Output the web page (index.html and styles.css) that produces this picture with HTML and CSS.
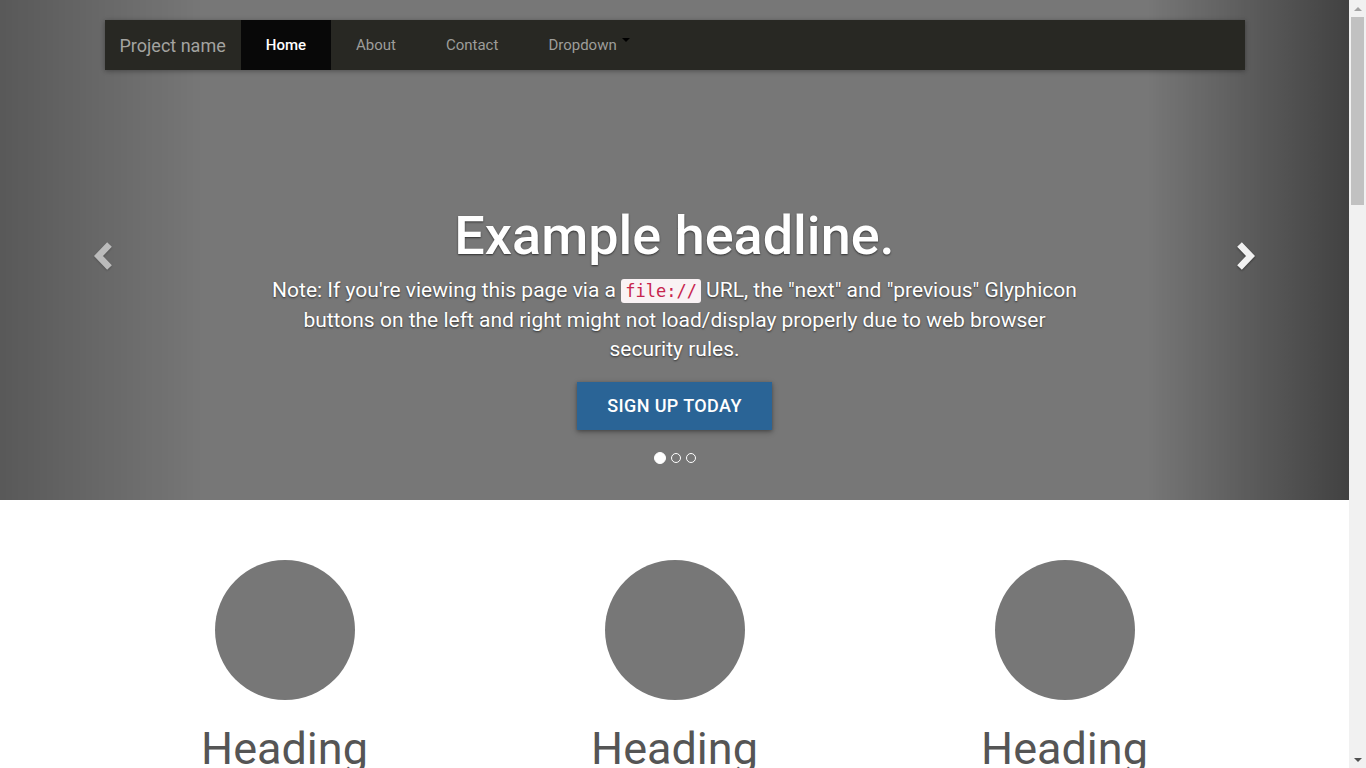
FILE: index.html
```html
<!DOCTYPE html>
<html lang="en">
<head>
<meta charset="utf-8">
<title>Carousel Template</title>
<link rel="stylesheet" href="styles.css">
</head>
<body>
<div class="page">
  <div class="navbar-wrapper">
    <nav class="navbar">
      <a class="brand" href="#">Project name</a>
      <ul class="nav">
        <li class="active"><a href="#">Home</a></li>
        <li><a href="#">About</a></li>
        <li><a href="#">Contact</a></li>
        <li><a href="#" class="dropdown">Dropdown <span class="caret"></span></a></li>
      </ul>
    </nav>
  </div>

  <div class="carousel">
    <a class="control left" href="#">
      <svg class="chev chev-left" width="22" height="32" viewBox="0 0 22 32"><path d="M17.5 3.5 L6.5 15 L17.5 26.5" fill="none" stroke="currentColor" stroke-width="6.5"/></svg>
    </a>
    <div class="caption">
      <h1>Example headline.</h1>
      <p class="note">Note: If you're viewing this page via a <code>file://</code> URL, the "next" and "previous" Glyphicon buttons on the left and right might not load/display properly due to web browser security rules.</p>
      <p><a class="btn" href="#">Sign up today</a></p>
    </div>
    <a class="control right" href="#">
      <svg class="chev chev-right" width="22" height="32" viewBox="0 0 22 32"><path d="M4.5 3.5 L15.5 15 L4.5 26.5" fill="none" stroke="currentColor" stroke-width="6.5"/></svg>
    </a>
    <ol class="indicators">
      <li class="on"></li>
      <li></li>
      <li></li>
    </ol>
  </div>

  <div class="marketing">
    <div class="col">
      <div class="circle"></div>
      <h2>Heading</h2>
      <p>Donec sed odio dui. Etiam porta sem malesuada magna mollis euismod. Nullam id dolor id nibh ultricies vehicula ut id elit. Morbi leo risus, porta ac consectetur ac, vestibulum at eros.</p>
      <p><a class="btn-default" href="#">View details &raquo;</a></p>
    </div>
    <div class="col">
      <div class="circle"></div>
      <h2>Heading</h2>
      <p>Duis mollis, est non commodo luctus, nisi erat porttitor ligula, eget lacinia odio sem nec elit. Cras mattis consectetur purus sit amet fermentum.</p>
      <p><a class="btn-default" href="#">View details &raquo;</a></p>
    </div>
    <div class="col">
      <div class="circle"></div>
      <h2>Heading</h2>
      <p>Donec sed odio dui. Cras justo odio, dapibus ac facilisis in, egestas eget quam. Vestibulum id ligula porta felis euismod semper.</p>
      <p><a class="btn-default" href="#">View details &raquo;</a></p>
    </div>
  </div>
</div>
<div class="scrollbar" aria-hidden="true">
  <span class="sb-up"></span>
  <span class="sb-thumb"></span>
  <span class="sb-track"></span>
  <span class="sb-down"></span>
</div>
</body>
</html>
```

FILE: styles.css
```css
* { box-sizing: border-box; }
html, body { margin: 0; padding: 0; }
body {
  font-family: Roboto, "Liberation Sans", sans-serif;
  font-size: 14px;
  line-height: 1.42857;
  color: #555;
  background: #fff;
}
a { text-decoration: none; }

.page {
  position: relative;
  margin-right: 17px;
}

.scrollbar {
  position: fixed;
  top: 0;
  right: 0;
  width: 17px;
  height: 100vh;
  background: #f1f1f1;
  display: flex;
  flex-direction: column;
  align-items: center;
  z-index: 100;
}
.sb-up, .sb-down {
  height: 17px;
  width: 17px;
  display: flex;
  align-items: center;
  justify-content: center;
}
.sb-up::before {
  content: "";
  border-bottom: 4px solid #a3a3a3;
  border-left: 4px solid transparent;
  border-right: 4px solid transparent;
}
.sb-down::before {
  content: "";
  border-top: 4px solid #505050;
  border-left: 4px solid transparent;
  border-right: 4px solid transparent;
}
.sb-thumb {
  width: 13px;
  height: 188px;
  background: #c1c1c1;
}
.sb-track { flex: 1; }

.navbar-wrapper {
  position: absolute;
  top: 20px;
  left: 0;
  right: 0;
  z-index: 20;
  display: flex;
  justify-content: center;
}
.navbar {
  width: 1140px;
  height: 50px;
  display: flex;
  align-items: stretch;
  background: #282823;
  box-shadow: 0 1px 6px rgba(0,0,0,0.16), 0 1px 4px rgba(0,0,0,0.2);
}
.brand {
  display: flex;
  align-items: center;
  padding: 1px 15px 0;
  font-size: 18px;
  color: #a3a3a0;
}
.nav {
  display: flex;
  list-style: none;
  margin: 0;
  padding: 0;
}
.nav li { display: flex; }
.nav a {
  display: flex;
  align-items: center;
  padding: 1px 25px 0;
  font-size: 15px;
  color: #9d9d9a;
}
.nav .active a {
  background: #080808;
  color: #fff;
  font-weight: 500;
}
.caret {
  align-self: flex-start;
  margin-top: 17px;
  margin-left: 5px;
  width: 0;
  height: 0;
  border-top: 4px solid #000;
  border-left: 4px solid transparent;
  border-right: 4px solid transparent;
}

.carousel {
  position: relative;
  height: 500px;
  background: #777;
  display: flex;
  justify-content: center;
  align-items: flex-end;
  margin-bottom: 60px;
  overflow: hidden;
}
.control {
  position: absolute;
  top: 0;
  bottom: 0;
  width: 15%;
  color: #fff;
}
.control.left {
  left: 0;
  opacity: 0.5;
  background-image: linear-gradient(to right, rgba(0,0,0,0.5) 0, rgba(0,0,0,0.0001) 100%);
}
.control.right {
  right: 0;
  opacity: 0.9;
  background-image: linear-gradient(to right, rgba(0,0,0,0.0001) 0, rgba(0,0,0,0.5) 100%);
}
.chev {
  position: absolute;
  top: 241px;
  filter: drop-shadow(0 1px 1px rgba(0,0,0,0.5));
}
.chev-left { left: 92px; }
.chev-right { right: 92px; }

.caption {
  width: 60%;
  padding: 0 0 50px;
  text-align: center;
  color: #fff;
  text-shadow: 0 1px 2px rgba(0,0,0,0.6);
  z-index: 10;
}
.caption h1 {
  margin: 0 0 11px;
  font-size: 54px;
  font-weight: 500;
  line-height: 1.1;
}
.caption p {
  margin: 0 0 20px;
  font-size: 21px;
  line-height: 29px;
}
.caption p.note { margin-bottom: 18px; }
code {
  font-family: "DejaVu Sans Mono", "Liberation Mono", monospace;
  font-size: 17px;
  padding: 2px 4px;
  color: #c7254e;
  background: #f9f2f4;
  border-radius: 3px;
  text-shadow: none;
}
.btn {
  display: inline-block;
  vertical-align: top;
  padding: 12px 30px;
  font-size: 18px;
  line-height: 24px;
  font-weight: 500;
  letter-spacing: 0.4px;
  text-transform: uppercase;
  color: #fff;
  background: #2a6496;
  text-shadow: none;
  box-shadow: 0 2px 6px rgba(0,0,0,0.3), 0 1px 3px rgba(0,0,0,0.2);
}
.indicators {
  position: absolute;
  bottom: 36px;
  left: 0;
  right: 0;
  margin: 0;
  padding: 0;
  list-style: none;
  display: flex;
  justify-content: center;
  align-items: center;
  gap: 5px;
  z-index: 15;
}
.indicators li {
  width: 10px;
  height: 10px;
  border: 1px solid #fff;
  border-radius: 50%;
}
.indicators li.on { width: 12px; height: 12px; background: #fff; }

.marketing {
  width: 1170px;
  margin: 0 auto;
  display: grid;
  grid-template-columns: repeat(3, 1fr);
  padding-bottom: 60px;
}
.col {
  padding: 0 15px;
  text-align: center;
}
.circle {
  width: 140px;
  height: 140px;
  border-radius: 50%;
  background: #777;
  margin: 0 auto;
}
.col h2 {
  margin: 24px 0 10px;
  font-size: 45px;
  font-weight: 400;
  line-height: 1.1;
  color: #555;
}
.col p { margin: 0 10px 10px; }
.btn-default {
  display: inline-block;
  padding: 6px 12px;
  color: #333;
  border: 1px solid #ccc;
}
```
